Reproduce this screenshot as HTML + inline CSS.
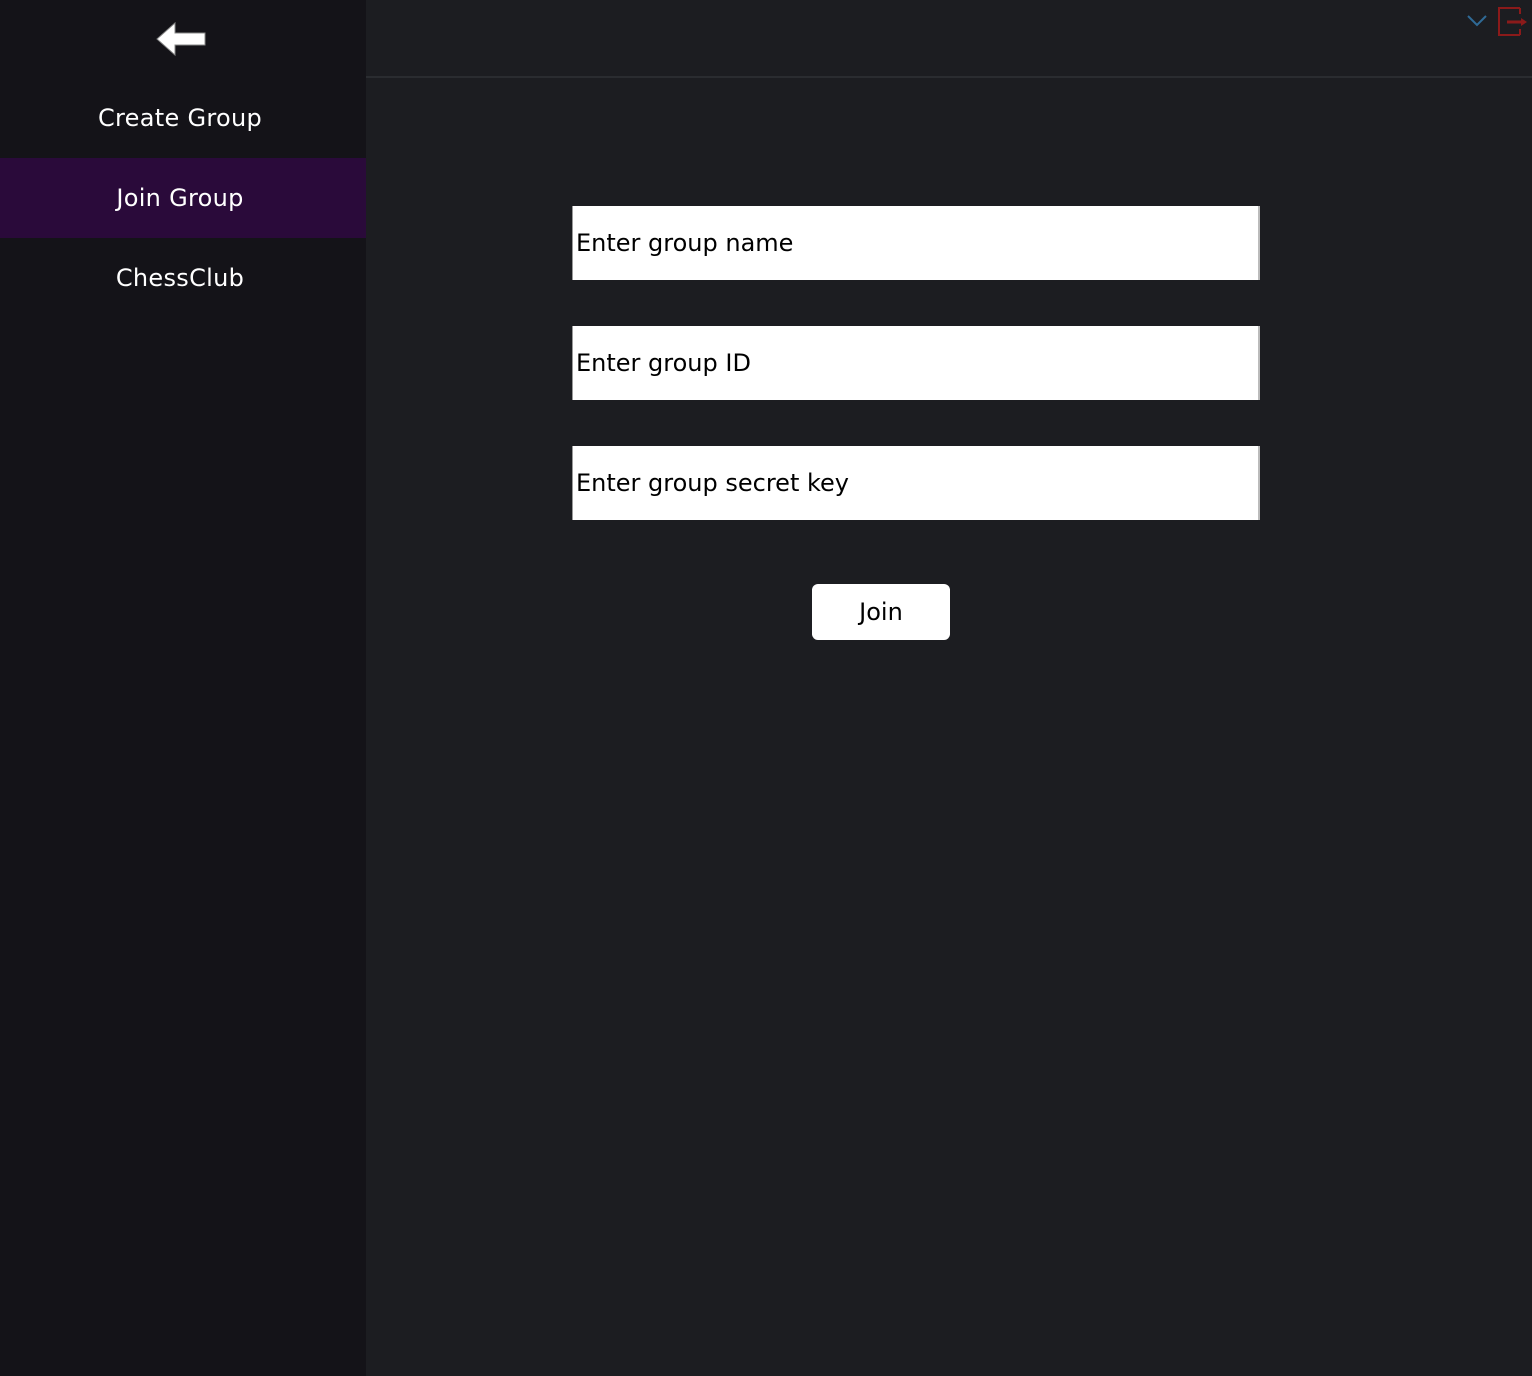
<!DOCTYPE html>
<html><head><style>
body{margin:0;width:1532px;height:1376px;background:#1c1d21;font-family:"DejaVu Sans","Liberation Sans",sans-serif;position:relative;overflow:hidden}
.side{position:absolute;left:0;top:0;width:366px;height:1376px;background:#141318}
.item{position:absolute;left:-3px;width:366px;height:80px;line-height:80px;text-align:center;color:#fff;font-size:24px;letter-spacing:0.3px}
.hdr{position:absolute;left:366px;top:76px;width:1166px;height:2px;background:#2a2c30}
.inp{position:absolute;left:572px;width:688px;height:74px;background:#fff;border-right:2px solid #bbb;border-left:1px solid #999;box-sizing:border-box;font-size:24px;line-height:74px;padding-left:3px;color:#000}
.btn{position:absolute;left:812px;top:584px;width:138px;height:56px;background:#fff;border-radius:6px;text-align:center;line-height:56px;font-size:24px;color:#000}
</style></head><body>
<div class="side">
<svg style="position:absolute;left:150px;top:18px" width="60" height="44"><polygon points="7,21 25,5 25,15 55,15 55,27 25,27 25,37" fill="#fff" stroke="#888" stroke-width="1"/></svg>
<div class="item" style="top:78px">Create Group</div>
<div class="item" style="top:158px;left:0;background:#2a0a3a;text-indent:-6px">Join Group</div>
<div class="item" style="top:238px">ChessClub</div>
</div>
<div class="hdr"></div>
<svg style="position:absolute;left:1460px;top:0" width="72" height="40">
<polyline points="8,16 17,25 26,16" fill="none" stroke="#2f6a96" stroke-width="2"/>
<polyline points="60,8 39,8 39,35 60,35" fill="none" stroke="#8b1a1a" stroke-width="2"/>
<line x1="60" y1="8" x2="60" y2="14" stroke="#8b1a1a" stroke-width="2"/>
<line x1="60" y1="29" x2="60" y2="35" stroke="#8b1a1a" stroke-width="2"/>
<line x1="47" y1="22" x2="62" y2="22" stroke="#8b1a1a" stroke-width="3"/>
<polygon points="61,18 67,22 61,26" fill="#8b1a1a"/>
</svg>
<div class="inp" style="top:206px">Enter group name</div>
<div class="inp" style="top:326px">Enter group ID</div>
<div class="inp" style="top:446px">Enter group secret key</div>
<div class="btn">Join</div>
</body></html>
